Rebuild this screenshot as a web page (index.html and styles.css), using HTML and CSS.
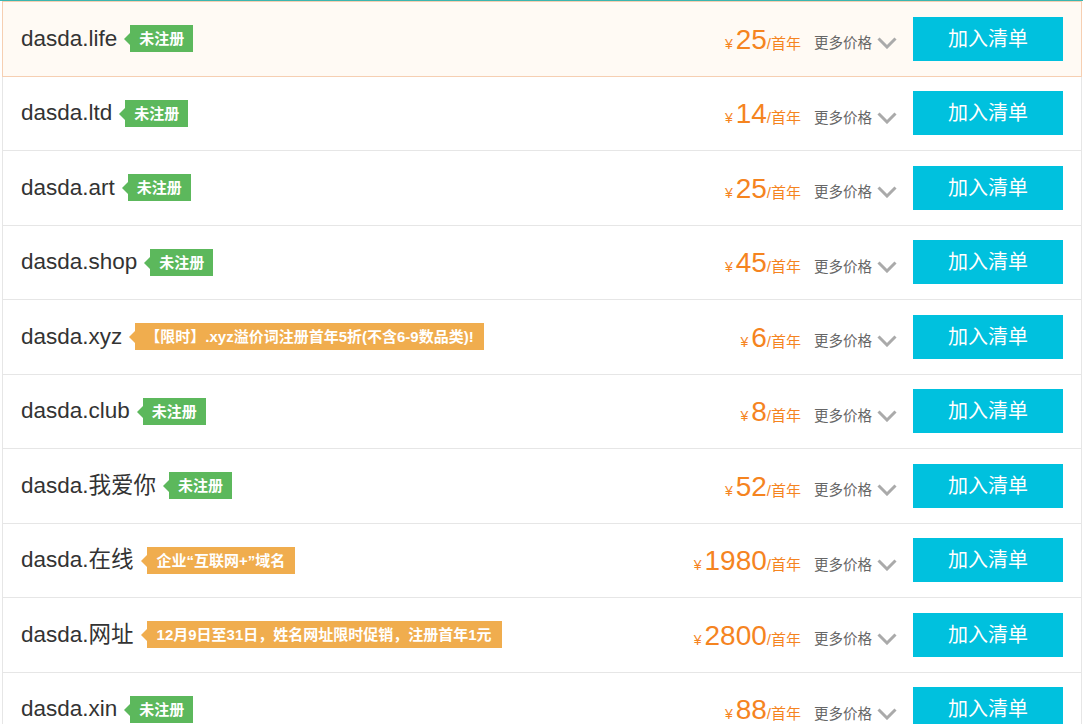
FILE: index.html
```html
<!DOCTYPE html>
<html lang="zh-CN">
<head>
<meta charset="utf-8">
<title>域名列表</title>
<link rel="stylesheet" href="styles.css">
</head>
<body>
<div class="topline"></div>
<ul class="list">
  <li class="row active">
    <div class="name"><span class="domain">dasda.life</span><span class="tag green">未注册</span></div>
    <div class="price"><span class="yen">¥</span><span class="num">25</span><span class="unit">/首年</span></div>
    <div class="more">更多价格<svg class="chev" viewBox="0 0 20 12" width="20" height="12"><path d="M1.5 1.5 L10 10 L18.5 1.5" fill="none" stroke="#aaa" stroke-width="3"/></svg></div>
    <button class="add">加入清单</button>
  </li>
  <li class="row">
    <div class="name"><span class="domain">dasda.ltd</span><span class="tag green">未注册</span></div>
    <div class="price"><span class="yen">¥</span><span class="num">14</span><span class="unit">/首年</span></div>
    <div class="more">更多价格<svg class="chev" viewBox="0 0 20 12" width="20" height="12"><path d="M1.5 1.5 L10 10 L18.5 1.5" fill="none" stroke="#aaa" stroke-width="3"/></svg></div>
    <button class="add">加入清单</button>
  </li>
  <li class="row">
    <div class="name"><span class="domain">dasda.art</span><span class="tag green">未注册</span></div>
    <div class="price"><span class="yen">¥</span><span class="num">25</span><span class="unit">/首年</span></div>
    <div class="more">更多价格<svg class="chev" viewBox="0 0 20 12" width="20" height="12"><path d="M1.5 1.5 L10 10 L18.5 1.5" fill="none" stroke="#aaa" stroke-width="3"/></svg></div>
    <button class="add">加入清单</button>
  </li>
  <li class="row">
    <div class="name"><span class="domain">dasda.shop</span><span class="tag green">未注册</span></div>
    <div class="price"><span class="yen">¥</span><span class="num">45</span><span class="unit">/首年</span></div>
    <div class="more">更多价格<svg class="chev" viewBox="0 0 20 12" width="20" height="12"><path d="M1.5 1.5 L10 10 L18.5 1.5" fill="none" stroke="#aaa" stroke-width="3"/></svg></div>
    <button class="add">加入清单</button>
  </li>
  <li class="row">
    <div class="name"><span class="domain">dasda.xyz</span><span class="tag orange">【限时】.xyz溢价词注册首年5折(不含6-9数品类)!</span></div>
    <div class="price"><span class="yen">¥</span><span class="num">6</span><span class="unit">/首年</span></div>
    <div class="more">更多价格<svg class="chev" viewBox="0 0 20 12" width="20" height="12"><path d="M1.5 1.5 L10 10 L18.5 1.5" fill="none" stroke="#aaa" stroke-width="3"/></svg></div>
    <button class="add">加入清单</button>
  </li>
  <li class="row">
    <div class="name"><span class="domain">dasda.club</span><span class="tag green">未注册</span></div>
    <div class="price"><span class="yen">¥</span><span class="num">8</span><span class="unit">/首年</span></div>
    <div class="more">更多价格<svg class="chev" viewBox="0 0 20 12" width="20" height="12"><path d="M1.5 1.5 L10 10 L18.5 1.5" fill="none" stroke="#aaa" stroke-width="3"/></svg></div>
    <button class="add">加入清单</button>
  </li>
  <li class="row">
    <div class="name"><span class="domain">dasda.我爱你</span><span class="tag green">未注册</span></div>
    <div class="price"><span class="yen">¥</span><span class="num">52</span><span class="unit">/首年</span></div>
    <div class="more">更多价格<svg class="chev" viewBox="0 0 20 12" width="20" height="12"><path d="M1.5 1.5 L10 10 L18.5 1.5" fill="none" stroke="#aaa" stroke-width="3"/></svg></div>
    <button class="add">加入清单</button>
  </li>
  <li class="row">
    <div class="name"><span class="domain">dasda.在线</span><span class="tag orange">企业“互联网+”域名</span></div>
    <div class="price"><span class="yen">¥</span><span class="num">1980</span><span class="unit">/首年</span></div>
    <div class="more">更多价格<svg class="chev" viewBox="0 0 20 12" width="20" height="12"><path d="M1.5 1.5 L10 10 L18.5 1.5" fill="none" stroke="#aaa" stroke-width="3"/></svg></div>
    <button class="add">加入清单</button>
  </li>
  <li class="row">
    <div class="name"><span class="domain">dasda.网址</span><span class="tag orange">12月9日至31日，姓名网址限时促销，注册首年1元</span></div>
    <div class="price"><span class="yen">¥</span><span class="num">2800</span><span class="unit">/首年</span></div>
    <div class="more">更多价格<svg class="chev" viewBox="0 0 20 12" width="20" height="12"><path d="M1.5 1.5 L10 10 L18.5 1.5" fill="none" stroke="#aaa" stroke-width="3"/></svg></div>
    <button class="add">加入清单</button>
  </li>
  <li class="row">
    <div class="name"><span class="domain">dasda.xin</span><span class="tag green">未注册</span></div>
    <div class="price"><span class="yen">¥</span><span class="num">88</span><span class="unit">/首年</span></div>
    <div class="more">更多价格<svg class="chev" viewBox="0 0 20 12" width="20" height="12"><path d="M1.5 1.5 L10 10 L18.5 1.5" fill="none" stroke="#aaa" stroke-width="3"/></svg></div>
    <button class="add">加入清单</button>
  </li>
</ul>
</body>
</html>
```
FILE: styles.css
```css
* { box-sizing: border-box; }
html, body { margin: 0; padding: 0; background: #fff; overflow: hidden; }
body {
  font-family: "Liberation Sans", "Noto Sans CJK SC", sans-serif;
  color: #333;
}
.topline {
  height: 1px;
  background: #3bb6b0;
}
.list {
  list-style: none;
  margin: 0 0 0 2px;
  padding: 0;
  width: 1080px;
}
.row {
  display: flex;
  align-items: center;
  height: 74.5px;
  padding: 0 18px 0 18px;
  border-left: 1px solid #e6e6e6;
  border-right: 1px solid #e6e6e6;
  border-bottom: 1px solid #e6e6e6;
}
.row.active {
  height: 75.5px;
  background: #fffaf4;
  border: 1px solid #f6cfb2;
}
.name {
  flex: 1;
  display: flex;
  align-items: center;
}
.domain {
  font-size: 22.5px;
  color: #333;
  line-height: 28px;
}
.tag {
  position: relative;
  margin-left: 13px;
  height: 27px;
  line-height: 27px;
  padding: 0 9px;
  font-size: 15px;
  font-weight: bold;
  color: #fff;
  white-space: nowrap;
}
.tag::before {
  content: "";
  position: absolute;
  left: -6px;
  top: 8px;
  border-top: 6px solid transparent;
  border-bottom: 6px solid transparent;
  border-right: 6px solid;
}
.tag.green { background: #5cb85c; }
.tag.green::before { border-right-color: #5cb85c; }
.tag.orange { background: #f0ad4e; padding: 0 10px; }
.tag.orange::before { border-right-color: #f0ad4e; }
.price {
  display: flex;
  align-items: baseline;
  color: #f5841f;
  white-space: nowrap;
  margin-top: 2px;
}
.yen { font-size: 14px; margin-right: 3px; }
.num { font-size: 28px; line-height: 30px; }
.unit { font-size: 15px; }
.more {
  display: flex;
  align-items: center;
  margin-left: 13px;
  margin-top: 6px;
  font-size: 14.5px;
  color: #666;
  white-space: nowrap;
}
.chev { margin-left: 5px; margin-top: 3px; }
.add {
  margin-left: 16px;
  width: 150px;
  height: 44px;
  border: 0;
  background: #00c1de;
  color: #fff;
  font-family: "Noto Sans CJK SC", sans-serif;
  font-size: 20px;
  line-height: 40px;
  padding: 0 0 2px;
  cursor: pointer;
}
```
